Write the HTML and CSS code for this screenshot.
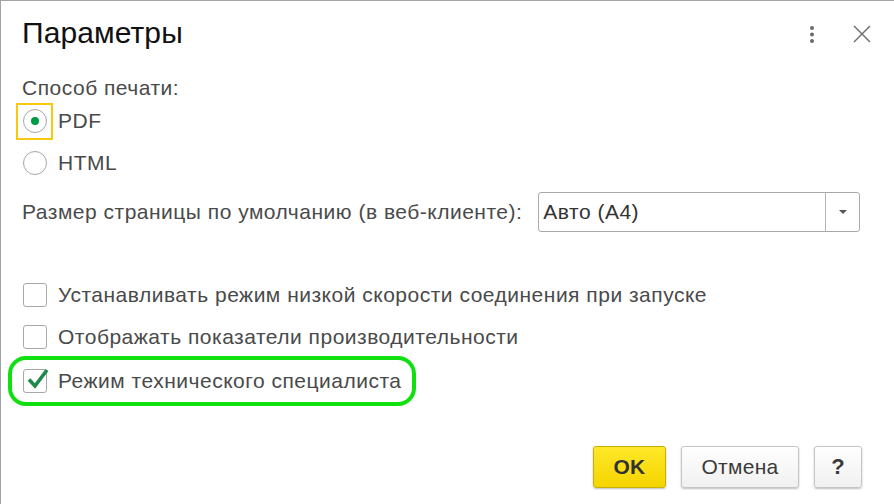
FILE: index.html
```html
<!DOCTYPE html>
<html lang="ru">
<head>
<meta charset="utf-8">
<title>Параметры</title>
<link rel="stylesheet" href="styles.css">
</head>
<body>
<div class="dialog">
  <div class="header">
    <div class="title">Параметры</div>
    <div class="tools">
      <svg class="kebab" width="6" height="18" viewBox="0 0 6 18"><circle cx="3" cy="3" r="2" fill="#6b6b6b"/><circle cx="3" cy="9.5" r="2" fill="#6b6b6b"/><circle cx="3" cy="16" r="2" fill="#6b6b6b"/></svg>
      <svg class="close" width="18" height="18" viewBox="0 0 18 18"><path d="M1 1 L17 17 M17 1 L1 17" stroke="#6b6b6b" stroke-width="1.4" fill="none"/></svg>
    </div>
  </div>
  <div class="content">
    <div class="label">Способ печати:</div>
    <div class="radio-row">
      <span class="focus"><span class="radio checked"></span></span>
      <span class="text">PDF</span>
    </div>
    <div class="radio-row">
      <span class="focus nofocus"><span class="radio"></span></span>
      <span class="text">HTML</span>
    </div>
    <div class="combo-row">
      <span class="text">Размер страницы по умолчанию (в веб-клиенте):</span>
      <div class="combo">
        <span class="combo-value">Авто (А4)</span>
        <span class="combo-btn"><span class="arrow"></span></span>
      </div>
    </div>
    <div class="checks">
      <div class="check-row"><span class="box"></span><span class="text">Устанавливать режим низкой скорости соединения при запуске</span></div>
      <div class="check-row"><span class="box"></span><span class="text">Отображать показатели производительности</span></div>
      <div class="check-row highlight"><span class="box"><svg class="tick" width="24" height="22" viewBox="0 0 24 22"><path d="M3 11.5 L9 18 L21 2" stroke="#1b8a4a" stroke-width="3.6" fill="none" stroke-linejoin="miter"/></svg></span><span class="text">Режим технического специалиста</span></div>
    </div>
  </div>
  <div class="footer">
    <button class="btn ok">OK</button>
    <button class="btn">Отмена</button>
    <button class="btn help">?</button>
  </div>
</div>
</body>
</html>
```
FILE: styles.css
```css
html, body {
  margin: 0;
  padding: 0;
  background: #fff;
}
body {
  width: 894px;
  height: 504px;
  overflow: hidden;
  font-family: "Liberation Sans", Arial, sans-serif;
  color: #4a4a4a;
}
.dialog {
  box-sizing: border-box;
  width: 894px;
  height: 504px;
  border-top: 1px solid #a3a3a3;
  border-left: 1px solid #a3a3a3;
  display: flex;
  flex-direction: column;
}
.header {
  height: 65px;
  display: flex;
  align-items: center;
  justify-content: space-between;
  padding-left: 21px;
  padding-right: 23px;
}
.title {
  font-size: 30px;
  letter-spacing: 0.1px;
  color: #111;
  margin-top: -1px;
}
.tools {
  display: flex;
  align-items: center;
  gap: 38px;
}
.content {
  padding-left: 21px;
  font-size: 21px;
  letter-spacing: 0.5px;
  line-height: 24px;
}
.label {
  height: 24px;
  margin-top: 10px;
}
.radio-row {
  display: flex;
  align-items: center;
  height: 42px;
}
.focus {
  box-sizing: border-box;
  width: 37px;
  height: 37px;
  border: 2px solid #f6c90e;
  display: flex;
  align-items: center;
  justify-content: center;
  margin-left: -6px;
  margin-right: 5px;
}
.focus.nofocus { border-color: transparent; }
.radio {
  box-sizing: border-box;
  width: 24px;
  height: 24px;
  border: 1px solid #a6a6a6;
  border-radius: 50%;
  display: flex;
  align-items: center;
  justify-content: center;
}
.radio.checked::after {
  content: "";
  width: 8px;
  height: 8px;
  border-radius: 50%;
  background: #009b46;
}
.combo-row {
  display: flex;
  align-items: center;
  margin-top: 8px;
  height: 40px;
}
.combo {
  box-sizing: border-box;
  margin-left: 16px;
  width: 322px;
  height: 40px;
  border: 1px solid #a9a9a9;
  border-radius: 3px;
  display: flex;
  align-items: stretch;
}
.combo-value {
  flex: 1;
  display: flex;
  align-items: center;
  padding-left: 4px;
  color: #333;
}
.combo-btn {
  width: 33px;
  border-left: 1px solid #b5b5b5;
  display: flex;
  align-items: center;
  justify-content: center;
}
.arrow {
  width: 0;
  height: 0;
  border-left: 4px solid transparent;
  border-right: 4px solid transparent;
  border-top: 4px solid #555;
}
.checks {
  margin-top: 42px;
  display: flex;
  flex-direction: column;
}
.check-row {
  display: flex;
  align-items: center;
  height: 42px;
  padding-left: 1px;
}
.box {
  box-sizing: border-box;
  width: 24px;
  height: 24px;
  border: 1px solid #a9a9a9;
  border-radius: 3px;
  margin-right: 11px;
  position: relative;
  flex: none;
}
.tick {
  position: absolute;
  left: 2px;
  top: -2px;
}
.check-row.highlight {
  box-sizing: border-box;
  width: 408px;
  height: 50px;
  margin-left: -14px;
  margin-top: -2px;
  padding-left: 11px;
  border: 4px solid #10e010;
  border-radius: 18px;
}
.footer {
  margin-top: auto;
  margin-bottom: 16px;
  display: flex;
  justify-content: flex-end;
  gap: 15px;
  padding-right: 32px;
}
.btn {
  box-sizing: border-box;
  height: 42px;
  font-family: "Liberation Sans", Arial, sans-serif;
  font-size: 21px;
  letter-spacing: 0.3px;
  color: #3a3a3a;
  border: 1px solid #c6c6c6;
  border-radius: 3px;
  background: linear-gradient(#ffffff, #f0f0f0);
  box-shadow: 0 1px 2px rgba(0,0,0,0.25);
  padding: 0;
  width: 118px;
}
.btn.ok {
  width: 73px;
  font-weight: bold;
  color: #333;
  background: linear-gradient(#ffe82a, #f5d400);
  border-color: #c9b000;
}
.btn.help {
  width: 48px;
  font-weight: bold;
  font-size: 22px;
}
```
